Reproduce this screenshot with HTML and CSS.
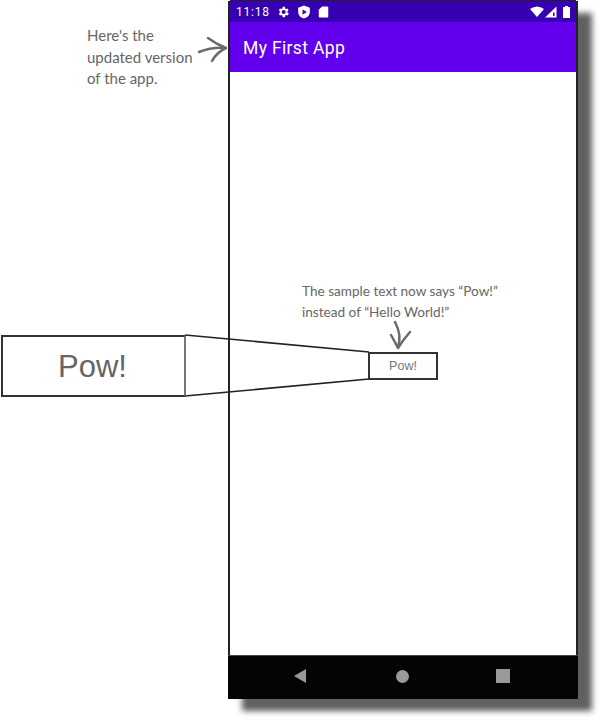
FILE: index.html
```html
<!DOCTYPE html>
<html lang="en">
<head>
    <meta charset="UTF-8">
    <meta name="viewport" content="width=device-width, initial-scale=1.0">
    <title>My First App</title>
    <link rel="stylesheet" href="styles.css">
</head>
<body>
    <div class="figure">
        <div class="phone">
            <div class="status-bar">
                <span class="clock">11:18</span>
                <svg class="status-icon" width="14" height="14" viewBox="0 0 24 24"><path fill="#fff" d="M19.4 13a7.500 7.500 0 0 0 0-2l2.100-1.600-2-3.500-2.500 1a7.500 7.500 0 0 0-1.700-1L15.400 3.200h-4l-.4 2.700a7.500 7.500 0 0 0-1.700 1l-2.500-1-2 3.500L6.900 11a7.500 7.500 0 0 0 0 2l-2.100 1.600 2 3.500 2.500-1a7.500 7.500 0 0 0 1.700 1l.4 2.700h4l.4-2.700a7.500 7.500 0 0 0 1.700-1l2.500 1 2-3.500zM13.200 15.500a3.500 3.500 0 1 1 0-7 3.500 3.500 0 0 1 0 7z"/></svg>
                <svg class="status-icon" width="14" height="14" viewBox="0 0 24 24"><path fill="#fff" fill-rule="evenodd" d="M12 1 2 4.500V12c0 5.500 4.200 9.800 10 11 5.800-1.200 10-5.500 10-11V4.500zM9.500 7.500 17 12l-7.500 4.500z"/></svg>
                <svg class="status-icon" width="11" height="12" viewBox="0 0 20 24"><path fill="#fff" d="M7 1h10.500A2 2 0 0 1 19.500 3v18a2 2 0 0 1-2 2h-15a2 2 0 0 1-2-2V7.500z"/></svg>
                <span class="status-spacer"></span>
                <svg width="14" height="11" viewBox="0 0 14 11"><path fill="#fff" d="M0 3Q7-2 14 3L7 11z"/></svg>
                <svg width="12" height="12" viewBox="0 0 12 12"><path fill="#fff" d="M0 11.500 11.500 .5v11z"/><path fill="#3700b3" d="M8 6.500h1.500v3.500H8z"/></svg>
                <svg class="battery" width="7" height="12" viewBox="0 0 7 12"><path fill="#fff" d="M2 0h3v1h2v11H0V1h2z"/></svg>
            </div>
            <div class="app-bar">My First App</div>
            <div class="content"></div>
            <div class="nav-bar">
                <span class="nav-back"></span>
                <span class="nav-home"></span>
                <span class="nav-recent"></span>
            </div>
        </div>

        <!-- annotations on top of the phone -->
        <p class="note note-update">Here's the<br>updated version<br>of the app.</p>
        <p class="note note-sample">The sample text now says “Pow!”<br>instead of “Hello World!”</p>

        <svg class="overlay" width="600" height="721" viewBox="0 0 600 721" fill="none">
            <g stroke="#6a6a6a" stroke-width="2.500" stroke-linecap="round" stroke-linejoin="round">
                <path d="M199 52Q212 47 225 48"/>
                <path d="M208 38Q216 44 226 48Q217 52 212 61"/>
                <path d="M395 322Q402 335 398 347"/>
                <path d="M391 335Q395 342 398 348Q403 340 410 332"/>
            </g>
            <g stroke="#222" stroke-width="1.500">
                <path d="M185 335 369 352"/>
                <path d="M185 396 369 379"/>
            </g>
        </svg>

        <div class="zoom-box zoom-big">Pow!</div>
        <div class="zoom-box zoom-small">Pow!</div>
    </div>
</body>
</html>
```

FILE: styles.css
```css
body {
    margin: 0;
    background-color: #fff;
    font-family: 'Liberation Sans', sans-serif;
}

.figure {
    position: relative;
    width: 600px;
    height: 721px;
    overflow: hidden;
    padding: 1px 0 0 228px;
    box-sizing: border-box;
}

.phone {
    display: flex;
    flex-direction: column;
    width: 350px;
    height: 698px;
    background-color: #fff;
    border-left: 2px solid #222;
    border-right: 2px solid #222;
    box-sizing: border-box;
    box-shadow: 14px 12px 6px #606060;
}

.status-bar {
    display: flex;
    align-items: center;
    height: 21px;
    padding: 0 6px;
    background-color: #3700b3;
    color: #fff;
    border-top: 1px solid #222;
    margin-top: -1px;
}

.clock {
    width: 40px;
    font-family: Roboto, sans-serif;
    font-size: 12px;
    letter-spacing: 0.8px;
}

.status-icon {
    margin-right: 6px;
}

.status-spacer {
    flex: 1;
}

.status-bar svg + svg {
    margin-left: 1px;
}

.status-bar .battery {
    margin-left: 6px;
}

.app-bar {
    display: flex;
    align-items: center;
    height: 50px;
    padding: 1px 0 0 13px;
    box-sizing: border-box;
    background-color: #6200ee;
    color: #fff;
    font-family: Roboto, sans-serif;
    font-size: 17.500px;
    font-weight: 400;
    letter-spacing: 0.35px;
}

.content {
    flex: 1;
    background-color: #fff;
}

.nav-bar {
    display: flex;
    align-items: center;
    justify-content: space-between;
    height: 44px;
    margin: 0 -2px;
    padding: 0 68px 3px 66px;
    background-color: #040404;
    border-top: 1px solid #444;
    box-sizing: border-box;
}

.nav-back {
    width: 0;
    height: 0;
    border-top: 7px solid transparent;
    border-bottom: 7px solid transparent;
    border-right: 12px solid #999;
}

.nav-home {
    width: 13px;
    height: 13px;
    margin-left: 2px;
    border-radius: 50%;
    background-color: #999;
}

.nav-recent {
    width: 14px;
    height: 14px;
    background-color: #999;
}

.note {
    position: absolute;
    margin: 0;
    color: #666;
    font-family: Lato, sans-serif;
    font-size: 15px;
    white-space: nowrap;
}

.note-update {
    top: 25px;
    left: 87px;
    line-height: 21.500px;
}

.note-sample {
    top: 281px;
    left: 302px;
    font-size: 13.600px;
    line-height: 20.500px;
}

.overlay {
    position: absolute;
    top: 0;
    left: 0;
}

.zoom-box {
    position: absolute;
    display: flex;
    align-items: center;
    justify-content: center;
    box-sizing: border-box;
    background-color: #fff;
    border: 2px solid #333;
    color: #666;
}

.zoom-big {
    top: 335px;
    left: 1px;
    width: 185px;
    height: 62px;
    padding: 2px 2px 0 0;
    font-size: 31px;
    border-right-color: #777;
}

.zoom-small {
    top: 352px;
    left: 368px;
    width: 70px;
    height: 28px;
    color: #777;
    font-size: 12.500px;
}
```
